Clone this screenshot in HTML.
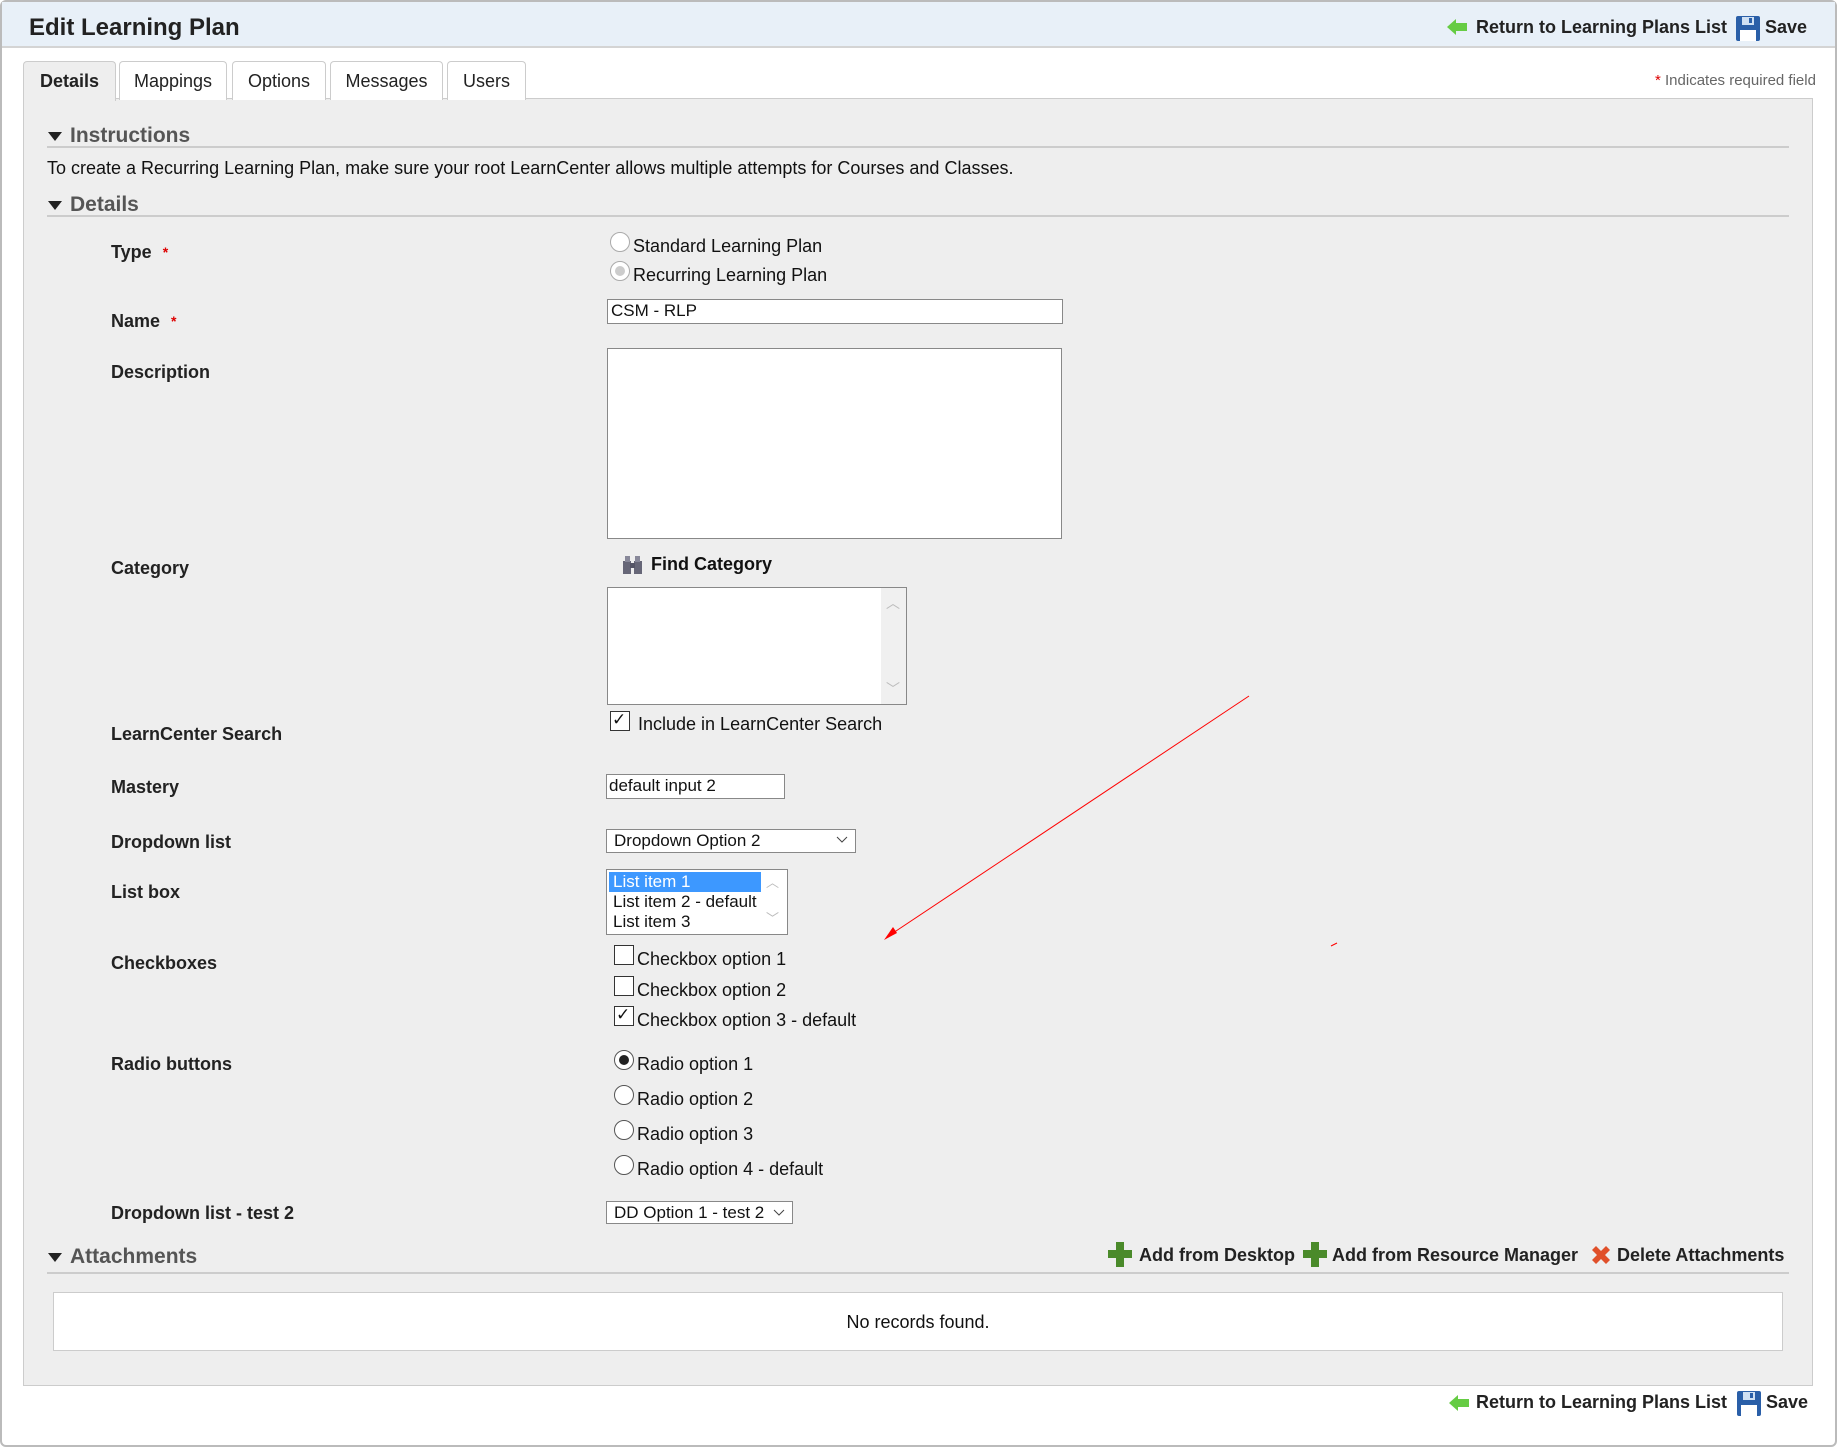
<!DOCTYPE html>
<html><head><meta charset="utf-8"><style>
*{box-sizing:border-box;margin:0;padding:0}
body{width:1837px;height:1447px;background:#fff;font-family:"Liberation Sans",Arial,sans-serif;color:#111;position:relative;overflow:hidden}
.a{position:absolute;white-space:nowrap;line-height:22px}
.lbl{position:absolute;left:111px;font-weight:bold;font-size:18px;color:#222;line-height:22px}
.t{font-size:18px}
.box{position:absolute;background:#fff;border:1px solid #888}
.tab{position:absolute;top:61px;height:39px;border:1px solid #ccc;border-bottom:none;border-radius:4px 4px 0 0;background:#fff;font-size:18px;text-align:center;line-height:38px;color:#222}
.sec{position:absolute;left:47px;width:1742px;height:22px;border-bottom:2px solid #ccc}
.sec span{position:absolute;left:23px;top:-2px;font-size:21px;font-weight:bold;color:#555}
.tri{position:absolute;left:1px;top:6px;width:0;height:0;border-left:7px solid transparent;border-right:7px solid transparent;border-top:9px solid #222}
.cb{position:absolute;width:20px;height:20px;border:1px solid #333;background:#fff}
.rd{position:absolute;width:20px;height:20px;border:1px solid #555;border-radius:50%;background:#fff}
.act{font-weight:bold;font-size:18px;color:#222}
</style></head><body>
<div style="position:absolute;left:0;top:0;width:1837px;height:1447px;border:2px solid #bbb;border-radius:6px"></div>
<div style="position:absolute;left:2px;top:2px;width:1833px;height:46px;background:#e8f0f8;border-bottom:2px solid #d4d4d4"></div>
<div class="a" style="left:29px;top:14px;font-size:24px;font-weight:bold;color:#222;line-height:27px">Edit Learning Plan</div>

<svg class="a" style="left:1446px;top:18px" width="22" height="18" viewBox="0 0 22 18"><path d="M1 9 L10 1 L10 5 L21 5 L21 13 L10 13 L10 17 Z" fill="#6c4"/></svg>
<div class="a act" style="left:1476px;top:16px">Return to Learning Plans List</div>
<svg class="a" style="left:1736px;top:16px" width="24" height="25" viewBox="0 0 24 25"><rect x="0" y="0" width="24" height="25" rx="2" fill="#2a5fa8"/><rect x="6" y="1" width="12" height="8" fill="#cfe0f3"/><rect x="13" y="2" width="3" height="5" fill="#2a5fa8"/><rect x="4" y="14" width="16" height="11" fill="#fff"/></svg>
<div class="a act" style="left:1765px;top:16px">Save</div>

<div class="a" style="left:1655px;top:70px;font-size:15px;color:#666"><span style="color:#d00">*</span> Indicates required field</div>

<div style="position:absolute;left:23px;top:98px;width:1790px;height:1288px;background:#eee;border:1px solid #ccc"></div>
<div class="tab" style="left:23px;width:93px;background:#eee;font-weight:bold;height:40px">Details</div>
<div class="tab" style="left:119px;width:108px">Mappings</div>
<div class="tab" style="left:232px;width:94px">Options</div>
<div class="tab" style="left:330px;width:113px">Messages</div>
<div class="tab" style="left:447px;width:79px">Users</div>

<div class="sec" style="top:126px"><div class="tri"></div><span>Instructions</span></div>
<div class="a t" style="left:47px;top:157px">To create a Recurring Learning Plan, make sure your root LearnCenter allows multiple attempts for Courses and Classes.</div>
<div class="sec" style="top:195px"><div class="tri"></div><span>Details</span></div>

<div class="lbl" style="top:241px">Type <span style="color:#d00;font-size:14px;vertical-align:top;margin-left:6px">*</span></div>
<div class="lbl" style="top:310px">Name <span style="color:#d00;font-size:14px;vertical-align:top;margin-left:6px">*</span></div>
<div class="lbl" style="top:361px">Description</div>
<div class="lbl" style="top:557px">Category</div>
<div class="lbl" style="top:723px">LearnCenter Search</div>
<div class="lbl" style="top:776px">Mastery</div>
<div class="lbl" style="top:831px">Dropdown list</div>
<div class="lbl" style="top:881px">List box</div>
<div class="lbl" style="top:952px">Checkboxes</div>
<div class="lbl" style="top:1053px">Radio buttons</div>
<div class="lbl" style="top:1202px">Dropdown list - test 2</div>

<div class="rd" style="left:610px;top:232px;border-color:#aaa"></div>
<div class="a t" style="left:633px;top:235px">Standard Learning Plan</div>
<div class="rd" style="left:610px;top:261px;border-color:#aaa"><div style="position:absolute;left:4px;top:4px;width:10px;height:10px;border-radius:50%;background:#ccc"></div></div>
<div class="a t" style="left:633px;top:264px">Recurring Learning Plan</div>

<div class="box" style="left:607px;top:299px;width:456px;height:25px"></div>
<div class="a" style="left:611px;top:300px;font-size:17px">CSM - RLP</div>
<div class="box" style="left:607px;top:348px;width:455px;height:191px"></div>

<svg class="a" style="left:622px;top:555px" width="21" height="20" viewBox="0 0 21 20"><rect x="1" y="6" width="8" height="13" fill="#667"/><rect x="12" y="6" width="8" height="13" fill="#667"/><rect x="3" y="1" width="5" height="6" fill="#889"/><rect x="13" y="1" width="5" height="6" fill="#889"/><rect x="8" y="8" width="5" height="5" fill="#556"/></svg>
<div class="a" style="left:651px;top:553px;font-size:18px;font-weight:bold">Find Category</div>
<div class="box" style="left:607px;top:587px;width:300px;height:118px"></div>
<div style="position:absolute;left:881px;top:588px;width:25px;height:116px;background:#f0f0f0"></div>
<div class="a" style="left:886px;top:592px;color:#bbb;font-size:14px">&#xFE3F;</div>
<div class="a" style="left:886px;top:678px;color:#bbb;font-size:14px">&#xFE40;</div>

<div class="cb" style="left:610px;top:711px"></div><div class="a" style="left:612px;top:709px;font-size:17px">✓</div>
<div class="a t" style="left:638px;top:713px">Include in LearnCenter Search</div>

<div class="box" style="left:606px;top:774px;width:179px;height:25px"></div>
<div class="a" style="left:609px;top:775px;font-size:17px">default input 2</div>

<div class="box" style="left:606px;top:829px;width:250px;height:24px"></div>
<div class="a" style="left:614px;top:830px;font-size:17px">Dropdown Option 2</div>
<svg class="a" style="left:836px;top:836px" width="12" height="8"><path d="M1 1 L6 6 L11 1" stroke="#444" fill="none"/></svg>

<div class="box" style="left:606px;top:869px;width:182px;height:66px"></div>
<div style="position:absolute;left:609px;top:872px;width:152px;height:20px;background:#3d98ff"></div>
<div class="a" style="left:613px;top:872px;font-size:17px;color:#fff;line-height:20px">List item 1</div>
<div class="a" style="left:613px;top:892px;font-size:17px;line-height:20px">List item 2 - default</div>
<div class="a" style="left:613px;top:912px;font-size:17px;line-height:20px">List item 3</div>
<div class="a" style="left:766px;top:872px;color:#bbb;font-size:13px">&#xFE3F;</div>
<div class="a" style="left:766px;top:908px;color:#bbb;font-size:13px">&#xFE40;</div>

<div class="cb" style="left:614px;top:945px"></div><div class="a t" style="left:637px;top:948px">Checkbox option 1</div>
<div class="cb" style="left:614px;top:976px"></div><div class="a t" style="left:637px;top:979px">Checkbox option 2</div>
<div class="cb" style="left:614px;top:1006px"></div><div class="a" style="left:616px;top:1004px;font-size:17px">✓</div><div class="a t" style="left:637px;top:1009px">Checkbox option 3 - default</div>

<div class="rd" style="left:614px;top:1050px"><div style="position:absolute;left:4px;top:4px;width:10px;height:10px;border-radius:50%;background:#222"></div></div><div class="a t" style="left:637px;top:1053px">Radio option 1</div>
<div class="rd" style="left:614px;top:1085px"></div><div class="a t" style="left:637px;top:1088px">Radio option 2</div>
<div class="rd" style="left:614px;top:1120px"></div><div class="a t" style="left:637px;top:1123px">Radio option 3</div>
<div class="rd" style="left:614px;top:1155px"></div><div class="a t" style="left:637px;top:1158px">Radio option 4 - default</div>

<div class="box" style="left:606px;top:1201px;width:187px;height:23px"></div>
<div class="a" style="left:614px;top:1202px;font-size:17px">DD Option 1 - test 2</div>
<svg class="a" style="left:773px;top:1209px" width="12" height="8"><path d="M1 1 L6 6 L11 1" stroke="#444" fill="none"/></svg>

<div class="sec" style="top:1252px;height:22px"><div class="tri" style="top:1px"></div><span style="top:-7px">Attachments</span></div>
<svg class="a" style="left:1108px;top:1242px" width="24" height="25" viewBox="0 0 24 25"><path d="M8 0H16V8H24V16H16V25H8V16H0V8H8Z" fill="#4a8a2a"/></svg>
<div class="a act" style="left:1139px;top:1244px">Add from Desktop</div>
<svg class="a" style="left:1303px;top:1242px" width="24" height="25" viewBox="0 0 24 25"><path d="M8 0H16V8H24V16H16V25H8V16H0V8H8Z" fill="#4a8a2a"/></svg>
<div class="a act" style="left:1332px;top:1244px">Add from Resource Manager</div>
<svg class="a" style="left:1589px;top:1243px" width="24" height="24" viewBox="0 0 24 24"><path d="M3 7L7 3L12 8L17 3L21 7L16 12L21 17L17 21L12 16L7 21L3 17L8 12Z" fill="#e0502a"/></svg>
<div class="a act" style="left:1617px;top:1244px">Delete Attachments</div>

<div style="position:absolute;left:53px;top:1292px;width:1730px;height:59px;background:#fff;border:1px solid #ccc"></div>
<div class="a t" style="left:53px;width:1730px;text-align:center;top:1311px">No records found.</div>

<svg class="a" style="left:1448px;top:1394px" width="22" height="18" viewBox="0 0 22 18"><path d="M1 9 L10 1 L10 5 L21 5 L21 13 L10 13 L10 17 Z" fill="#6c4"/></svg>
<div class="a act" style="left:1476px;top:1391px">Return to Learning Plans List</div>
<svg class="a" style="left:1737px;top:1391px" width="24" height="25" viewBox="0 0 24 25"><rect x="0" y="0" width="24" height="25" rx="2" fill="#2a5fa8"/><rect x="6" y="1" width="12" height="8" fill="#cfe0f3"/><rect x="13" y="2" width="3" height="5" fill="#2a5fa8"/><rect x="4" y="14" width="16" height="11" fill="#fff"/></svg>
<div class="a act" style="left:1766px;top:1391px">Save</div>

<svg class="a" style="left:0;top:0" width="1837" height="1447"><line x1="1249" y1="696" x2="890" y2="935" stroke="#f00" stroke-width="1"/><path d="M884 940 L893 927 L897 933 Z" fill="#f00"/><line x1="1331" y1="946" x2="1337" y2="943" stroke="#f00"/></svg>
</body></html>
